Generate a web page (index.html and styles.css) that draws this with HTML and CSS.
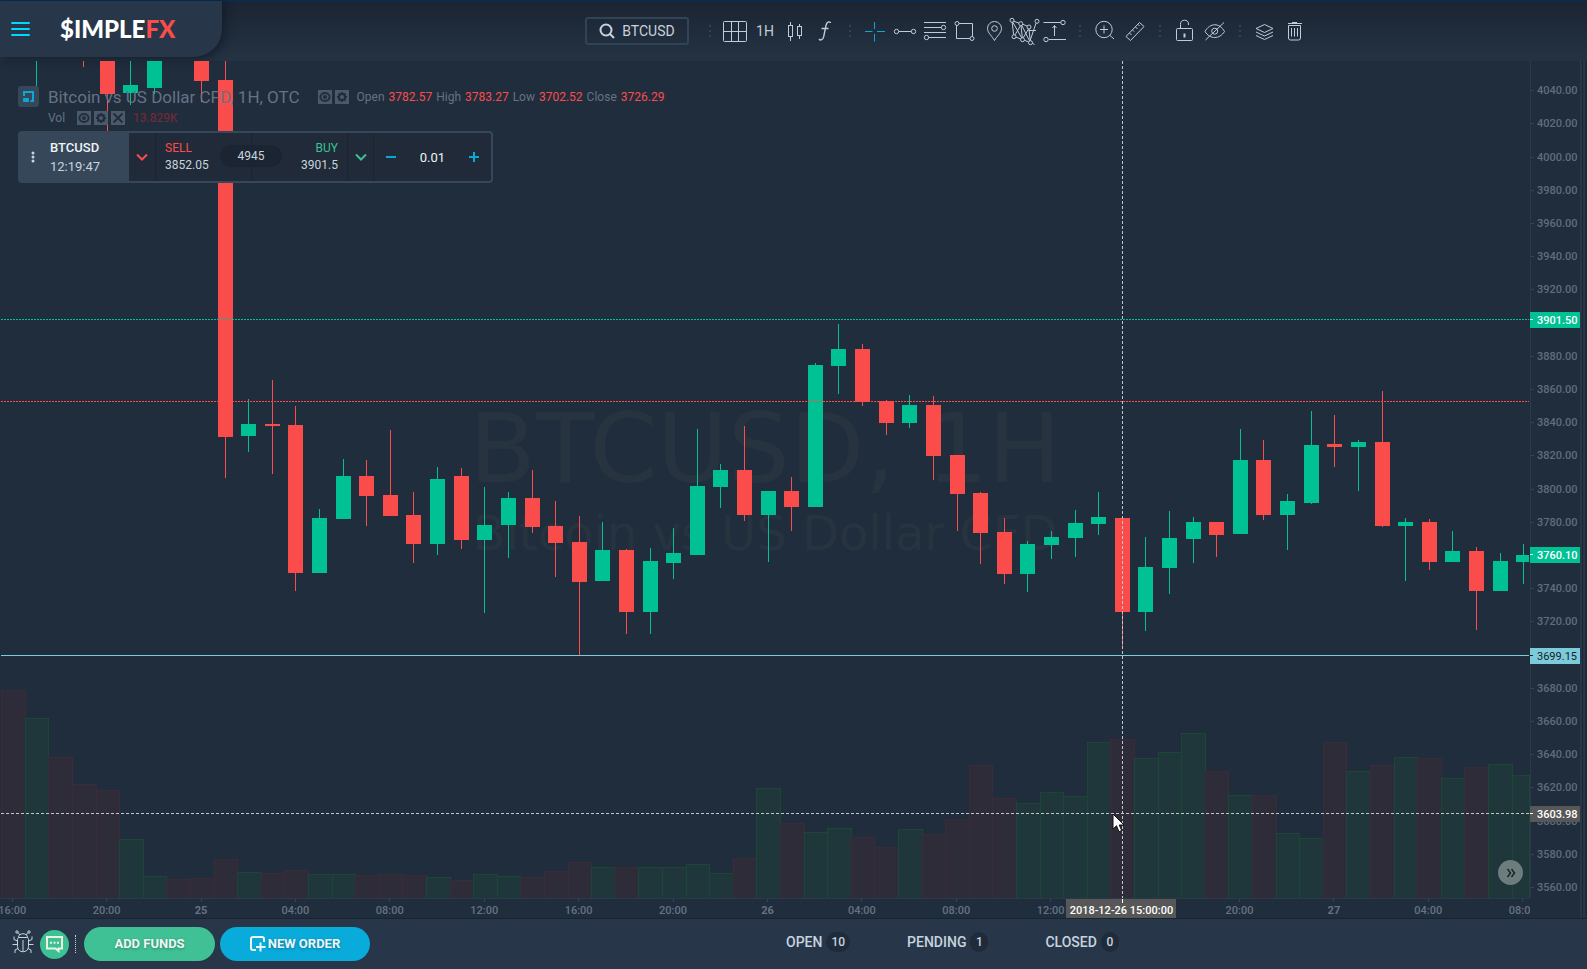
FILE: index.html
```html
<!DOCTYPE html>
<html lang="en">
<head>
<meta charset="utf-8">
<title>SimpleFX – BTCUSD</title>
<link rel="stylesheet" href="styles.css">
</head>
<body>
<header class="topbar">
  <div class="brand">
    <button class="burger" aria-label="Menu"><span></span><span></span><span></span></button>
    <a class="logo" href="#">$IMPLE<span class="logo-fx">FX</span></a>
  </div>
  <nav class="toolbar" aria-label="Chart tools">
    <button class="search"><svg width="16" height="16" viewBox="0 0 16 16"><circle cx="7" cy="7" r="5.5"/><path d="M11 11l4 4"/></svg>BTCUSD</button>
    <span class="sep"></span>
    <button class="tool" aria-label="Layout"><svg viewBox="0 0 30 30"><rect x="3.5" y="5.5" width="23" height="20" rx="1"/><path d="M11.5 5.5v20M18.5 5.5v20M3.5 15.5h23"/></svg></button>
    <button class="tool">1H</button>
    <button class="tool" aria-label="Chart type"><svg viewBox="0 0 30 30"><rect x="8.500" y="9.500" width="4" height="11"/><path d="M10.500 6v3.500M10.500 20.500V25M19.500 8v2.500M19.500 19.500V23"/><rect x="17.500" y="10.500" width="4" height="9"/></svg></button>
    <button class="tool" aria-label="Indicators"><svg viewBox="0 0 30 30"><path d="M20.500 7c-.3-1.700-3.600-2-4.500 2.500l-2.300 11.200c-.7 3.300-3.300 4-4.700 2.300M11.500 12.500h7" stroke-width="1.400"/></svg></button>
    <span class="sep"></span>
    <button class="tool tool-on" aria-label="Crosshair"><svg viewBox="0 0 30 30"><path d="M5 15.500h7.500M17 15.500h8M14.500 6v7M14.500 18v7.500"/></svg></button>
    <button class="tool" aria-label="Trend line"><svg viewBox="0 0 30 30"><circle cx="6.500" cy="15.500" r="2.200"/><circle cx="23.500" cy="15.500" r="2.200"/><path d="M8.700 15.500h12.600"/></svg></button>
    <button class="tool" aria-label="Fibonacci"><svg viewBox="0 0 30 30"><path d="M4 6.500h22M4 11.500h17.300M4 16.500h22M8.700 21.500H26"/><circle cx="23.500" cy="11.500" r="2.200"/><circle cx="6.500" cy="21.500" r="2.200"/></svg></button>
    <button class="tool" aria-label="Rectangle"><svg viewBox="0 0 30 30"><circle cx="7" cy="7.500" r="2"/><circle cx="22" cy="22.500" r="2"/><path d="M9 7.500h13.500v13M20 22.500H6.500v-13"/></svg></button>
    <button class="tool" aria-label="Marker"><svg viewBox="0 0 30 30"><path d="M14.500 24.500c-2-4-7-7.500-7-12a7 7 0 0 1 14 0c0 4.500-5 8-7 12z"/><circle cx="14.500" cy="12.500" r="2.800"/></svg></button>
    <button class="tool" aria-label="Pattern"><svg viewBox="0 0 30 30"><path d="M2.200 6.300l1.400 12.400M3.800 5.200l5.200 2M10.500 9.700l-5.500 9.200M11 9.700l1.300 12M2.800 6.200l8.800 15.500M12.800 8.300l4.400 1.800M18.500 13l-5.300 8.800M19 13l1.200 11.700M11.800 9.500l7.700 15.200M6 21.200l4.600 1.800M14.500 24.300l4 1.500M26 7.200l-6 17.600M18.500 14.500l7.500 0M22 27l2.500 1.500"/><circle cx="2" cy="4.300" r="2"/><circle cx="10.800" cy="7.700" r="2"/><circle cx="19" cy="11" r="2"/><circle cx="27" cy="5.300" r="2"/><circle cx="4" cy="20.700" r="2"/><circle cx="12.500" cy="23.700" r="2"/><circle cx="20.500" cy="26.700" r="2"/></svg></button>
    <button class="tool" aria-label="Range"><svg viewBox="0 0 30 30"><path d="M3.500 6.500h17.300M9 23.500h17M14.500 20V10M12.500 12l2-2.500 2 2.500"/><circle cx="23" cy="6.500" r="2.200"/><circle cx="6" cy="23.500" r="2.200"/></svg></button>
    <span class="sep"></span>
    <button class="tool" aria-label="Zoom in"><svg viewBox="0 0 30 30"><circle cx="14" cy="13.500" r="8.200"/><path d="M20 19.500l4 3.500M10 13.500h8M14 9.500v8"/></svg></button>
    <button class="tool" aria-label="Measure"><svg viewBox="0 0 30 30"><path d="M6 20.500L19.500 6.500l4.500 4L10.500 24.500zM9.500 17l2 2M12.500 14l1.500 1.500M15.500 11l2 2M18 8.500l1.500 1.500"/></svg></button>
    <span class="sep"></span>
    <button class="tool" aria-label="Lock"><svg viewBox="0 0 30 30"><rect x="6.500" y="12.500" width="16" height="12" rx="1"/><path d="M10.500 12.500V8.500a4 4 0 0 1 8-.5v1"/><path d="M14.500 17.500v4" stroke-width="2"/></svg></button>
    <button class="tool" aria-label="Hide drawings"><svg viewBox="0 0 30 30"><path d="M5 15.500c5-9 14.500-9 19.500 0-5 8-14.500 8-19.500 0zM5.500 24L24 6.500"/><circle cx="14.700" cy="15.200" r="3"/></svg></button>
    <span class="sep"></span>
    <button class="tool" aria-label="Layers"><svg viewBox="0 0 30 30"><path d="M14.500 8.500l8.500 4-8.500 4-8.500-4zM6 16l8.500 4 8.500-4M6 19.500l8.500 4 8.500-4"/></svg></button>
    <button class="tool" aria-label="Delete"><svg viewBox="0 0 30 30"><path d="M8 7.500h14M12 6.500h5M8.500 9.500h12v12.500a2 2 0 0 1-2 2h-8a2 2 0 0 1-2-2zM11.500 12v8.500M14.500 12v8.500M17.500 12v8.500"/></svg></button>
  </nav>
</header>

<main class="chart">
  <section class="plot">
    <div class="watermark"><span class="wm-symbol">BTCUSD, 1H</span><span class="wm-name">Bitcoin vs US Dollar CFD</span></div>
    <svg class="candles" id="candles" viewBox="0 0 1530 837" preserveAspectRatio="none"></svg>
    <div class="legend">
      <div class="legend-row">
        <button class="collapse" aria-label="Collapse"><svg width="13" height="13" viewBox="0 0 13 13"><path d="M2 6V2h9v9H8.500"/><rect class="solid" x="1" y="8" width="6" height="4" rx="1"/></svg></button>
        <h1 class="legend-title">Bitcoin vs US Dollar CFD, 1H, OTC</h1>
        <span class="minis"><button class="mini" aria-label="Show"><svg viewBox="0 0 14 14"><ellipse cx="7" cy="7" rx="4.600" ry="4"/><circle cx="7" cy="7" r="1"/></svg></button><button class="mini" aria-label="Settings"><svg viewBox="0 0 14 14"><circle cx="7" cy="7" r="3"/><path d="M7 2v2M7 10v2M2 7h2M10 7h2M3.500 3.500l1.400 1.400M9.100 9.100l1.400 1.400M10.500 3.500L9.100 4.900M4.900 9.100l-1.400 1.400"/></svg></button></span>
        <dl class="ohlc"><dt>Open</dt><dd>3782.57</dd><dt>High</dt><dd>3783.27</dd><dt>Low</dt><dd>3702.52</dd><dt>Close</dt><dd>3726.29</dd></dl>
      </div>
      <div class="vol-row">
        <span class="vol-name">Vol</span>
        <span class="minis"><button class="mini" aria-label="Show volume"><svg viewBox="0 0 14 14"><ellipse cx="7" cy="7" rx="4.600" ry="4"/><circle cx="7" cy="7" r="1"/></svg></button><button class="mini" aria-label="Volume settings"><svg viewBox="0 0 14 14"><circle cx="7" cy="7" r="3"/><path d="M7 2v2M7 10v2M2 7h2M10 7h2M3.500 3.500l1.400 1.400M9.100 9.100l1.400 1.400M10.500 3.500L9.100 4.900M4.900 9.100l-1.400 1.400"/></svg></button><button class="mini" aria-label="Remove volume"><svg viewBox="0 0 14 14"><path d="M2.500 2.500l9 9M11.500 2.500l-9 9"/></svg></button></span>
        <span class="vol-value">13.829K</span>
      </div>
      <div class="ticket">
        <div class="ticket-symbol">
          <svg width="4" height="12" viewBox="0 0 4 12"><circle cx="2" cy="2" r="1.500"/><circle cx="2" cy="6" r="1.500"/><circle cx="2" cy="10" r="1.500"/></svg>
          <div><strong>BTCUSD</strong><time>12:19:47</time></div>
        </div>
        <button class="chev chev-sell" aria-label="Sell options"><svg width="12" height="8" viewBox="0 0 12 8"><path d="M1 1.500l5 5 5-5"/></svg></button>
        <button class="side side-sell"><span>SELL</span>3852.05</button>
        <span class="spread">4945</span>
        <button class="side side-buy"><span>BUY</span>3901.5</button>
        <button class="chev chev-buy" aria-label="Buy options"><svg width="12" height="8" viewBox="0 0 12 8"><path d="M1 1.500l5 5 5-5"/></svg></button>
        <div class="stepper">
          <button aria-label="Decrease"><svg width="10" height="10" viewBox="0 0 10 10"><path d="M0 5h10"/></svg></button>
          <input aria-label="Volume" value="0.01">
          <button aria-label="Increase"><svg width="10" height="10" viewBox="0 0 10 10"><path d="M0 5h10M5 0v10"/></svg></button>
        </div>
      </div>
    </div>
    <button class="latest" aria-label="Scroll to latest"><svg width="10" height="10" viewBox="0 0 10 10"><path d="M1.500 1l3 4-3 4M5.500 1l3 4-3 4"/></svg></button>
    <svg class="cursor" width="14" height="20" viewBox="0 0 14 20"><path d="M1 1v15l3.500-3.300 2.500 6 2.700-1.200-2.500-5.500H12z"/></svg>
  </section>
  <aside class="prices">
    <ol class="price-list" id="prices"></ol>
    <span class="tag tag-buy">3901.50</span>
    <span class="tag tag-last">3760.10</span>
    <span class="tag tag-line">3699.15</span>
    <span class="tag tag-cross">3603.98</span>
  </aside>
  <div class="gutter"></div>
  <div class="times">
    <ol class="time-list"><li>16:00</li><li>20:00</li><li class="day">25</li><li>04:00</li><li>08:00</li><li>12:00</li><li>16:00</li><li>20:00</li><li class="day">26</li><li>04:00</li><li>08:00</li><li>12:00</li><li>16:00</li><li>20:00</li><li class="day">27</li><li>04:00</li><li>08:00</li></ol>
    <span class="time-tag">2018-12-26 15:00:00</span>
  </div>
</main>

<footer class="bottombar">
  <button class="bug" aria-label="Report a bug"><svg width="22" height="24" viewBox="0 0 22 24"><path d="M6.500 7.500c0-5 9-5 9 0zM5.500 9.500c0-1 .5-2 1.500-2h8c1 0 1.500 1 1.500 2v7c0 7-11 7-11 0zM11 10v11M8 5L6 2.500M14 5l2-2.500M5.500 11L2 9.500V6.500M16.500 11L20 9.500V6.500M5.500 14.500H.5M16.500 14.500h5M6 18.500l-3 1.500v3M16 18.500l3 1.500v3"/><circle cx="5" cy="2" r="1.200"/><circle cx="17" cy="2" r="1.200"/></svg></button>
  <button class="chat" aria-label="Chat"><svg width="17" height="17" viewBox="0 0 17 17"><path d="M1 1h15v11.500h-3.500V15l-3-2.500H1z"/><path d="M4 6.800h2M7.500 6.800h2M11 6.800h2"/></svg></button>
  <span class="foot-sep"></span>
  <button class="cta cta-funds">ADD FUNDS</button>
  <button class="cta cta-order"><svg width="16" height="16" viewBox="0 0 16 16"><path d="M6 14H3a2 2 0 0 1-2-2V3a2 2 0 0 1 2-2h9a2 2 0 0 1 2 2v3M10.500 6.500V15.500M6 11h9.500"/></svg>NEW ORDER</button>
  <nav class="orders">
    <a href="#">OPEN <span class="badge">10</span></a>
    <a href="#">PENDING <span class="badge">1</span></a>
    <a href="#">CLOSED <span class="badge">0</span></a>
  </nav>
</footer>
<script src="chart.js"></script>
</body>
</html>
```
FILE: styles.css
```css
* { box-sizing: border-box; }
body {
  margin: 0;
  height: 100vh;
  display: flex;
  flex-direction: column;
  overflow: hidden;
  background: #202d3d;
  color: #c7d3de;
  font-family: Roboto, "Liberation Sans", sans-serif;
  font-size: 12px;
}
button {
  padding: 0;
  border: 0;
  background: none;
  color: inherit;
  font: inherit;
  cursor: pointer;
}
svg { fill: none; stroke: currentColor; display: block; }
ol, dl, dd, h1 { margin: 0; padding: 0; list-style: none; }
a { color: inherit; text-decoration: none; }

/* Top bar */
.topbar {
  flex: none;
  height: 61px;
  display: flex;
  border-top: 1px solid #003058;
  background: linear-gradient(#1b2433, #243343);
}
.brand {
  flex: none;
  width: 222px;
  height: 56px;
  padding-left: 11px;
  display: flex;
  align-items: center;
  gap: 30px;
  border-bottom-right-radius: 28px;
  background: #273749;
  box-shadow: 2px 2px 10px rgba(10, 16, 26, .6);
}
.burger { display: grid; gap: 4px; width: 19px; }
.burger span { height: 2px; background: #00d9ff; border-radius: 1px; }
.logo { font: 900 24px/28px Lato, sans-serif; color: #fff; }
.logo-fx { color: #fb4c4c; }
.toolbar {
  display: flex;
  align-items: center;
  height: 60px;
  margin-left: 363px;
}
.search {
  display: flex;
  align-items: center;
  justify-content: center;
  gap: 7px;
  width: 104px;
  height: 28px;
  margin-right: 11px;
  border: 2px solid #314356;
  border-radius: 3px;
  font-size: 14px;
}
.search svg { stroke-width: 2; }
.sep {
  flex: none;
  width: 20px;
  height: 14px;
  background: radial-gradient(circle, #46566a 1px, transparent 1px) center / 20px 5px;
}
.tool { flex: none; width: 30px; height: 30px; font-size: 14px; color: #c0ccd8; }
.tool svg { width: 30px; height: 30px; overflow: visible; }
.tool-on { color: #0ba8d6; }

/* Chart */
.chart {
  flex: 1;
  min-height: 0;
  display: grid;
  grid-template: minmax(0, 1fr) 20px / minmax(0, 1fr) 50px 7px;
}
.plot { position: relative; overflow: hidden; }
.watermark {
  position: absolute;
  inset: 0;
  display: flex;
  flex-direction: column;
  align-items: center;
  justify-content: center;
  padding-top: 11px;
  font-family: "DejaVu Sans", sans-serif;
  color: #27333f;
  white-space: nowrap;
}
.wm-symbol { font-size: 97px; line-height: 96px; }
.wm-name { font-size: 48px; line-height: 72px; }
.candles {
  position: absolute;
  inset: 0;
  width: 100%;
  height: 100%;
  stroke: none;
  shape-rendering: crispEdges;
}
.up { fill: #00c194; }
.down { fill: #fb4c4c; }
.vol-up { fill: #1f373a; stroke: #1b4535; }
.vol-down { fill: #2f2c3a; stroke: #3b2a38; }
.line-buy { stroke: #00c194; stroke-dasharray: 2 1; }
.line-sell { stroke: #fb4c4c; stroke-dasharray: 2 1; }
.line-level { stroke: #7ccbdb; }
.line-cross { stroke: #c3c8cc; stroke-dasharray: 3 2; }

.legend { position: absolute; left: 18px; top: 25px; color: #647383; }
.legend-row { display: flex; align-items: center; height: 21px; }
.collapse {
  width: 21px;
  height: 21px;
  display: grid;
  place-items: center;
  border-radius: 3px;
  background: #36475a;
  color: #0ba8d6;
}
.collapse svg { stroke-width: 2; }
.collapse .solid { fill: currentColor; stroke: none; }
.legend-title { margin: 0 18px 0 9px; font-size: 17px; font-weight: 400; white-space: nowrap; }
.minis { display: flex; gap: 3px; }
.mini { width: 14px; height: 14px; background: #4b5a69; color: #212d3e; }
.mini svg { width: 14px; height: 14px; stroke-width: 2; }
.ohlc { display: flex; gap: 4px; margin-left: 8px; }
.ohlc dd { color: #fb4c4c; }
.vol-row { display: flex; align-items: center; height: 22px; padding-left: 30px; }
.vol-name { width: 29px; }
.vol-value { margin-left: 8px; color: #7a2a35; }

.ticket {
  display: flex;
  width: 475px;
  height: 52px;
  margin-top: 2px;
  border: 2px solid #36475a;
  border-radius: 4px;
  background: #212a38;
  color: #c7d3de;
  position: relative;
}
.ticket-symbol {
  display: flex;
  align-items: center;
  gap: 15px;
  width: 109px;
  padding-left: 11px;
  background: #36475a;
  font-size: 13px;
  line-height: 19px;
}
.ticket-symbol svg { fill: currentColor; stroke: none; }
.ticket-symbol strong { display: block; font-weight: 500; color: #eef3f7; }
.ticket-symbol time { display: block; }
.chev { width: 27px; display: grid; place-items: center; }
.chev svg { stroke-width: 2; }
.chev-sell { color: #fb4c4c; border-right: 1px solid #1b2431; }
.chev-buy { width: 26px; color: #3bc194; border-right: 1px solid #1b2431; }
.side { width: 96px; padding: 0 9px; line-height: 17px; text-align: left; }
.side span { display: block; }
.side-sell { border-right: 1px solid #1b2431; }
.side-sell span { color: #fb4c4c; }
.side-buy { border-right: 1px solid #1b2431; text-align: right; }
.side-buy span { color: #3bc194; }
.spread {
  position: absolute;
  left: 200px;
  top: 12px;
  width: 62px;
  height: 22px;
  border-radius: 11px;
  background: #1b2431;
  line-height: 22px;
  text-align: center;
}
.stepper { flex: 1; display: flex; align-items: center; justify-content: space-between; padding: 0 12px; }
.stepper button { color: #0ba8d6; }
.stepper svg { stroke-width: 2; }
.stepper input {
  width: 50px;
  border: 0;
  padding: 0;
  background: none;
  color: #eef3f7;
  font: 13px Roboto, sans-serif;
  text-align: center;
}
.latest {
  position: absolute;
  right: 7px;
  bottom: 13px;
  width: 25px;
  height: 25px;
  display: grid;
  place-items: center;
  border-radius: 50%;
  background: #6d7d7e;
  color: #1a2624;
}
.latest svg { stroke-width: 1.500; }
.cursor { position: absolute; left: 72.7%; top: 89.800%; fill: #fff; stroke: #10131a; }

/* Axes */
.prices {
  position: relative;
  border-left: 1px solid #2a394b;
  color: #5f6e7e;
  font-size: 11px;
  font-weight: 500;
}
.price-list { display: flex; flex-direction: column; height: calc(100% - 7px); margin-top: 13px; }
.price-list li { flex: 1; display: flex; align-items: center; gap: 3px; }
.price-list li::before { content: ""; width: 3px; height: 1px; background: #33445a; }
.tag {
  position: absolute;
  left: -1px;
  right: 0;
  height: 16px;
  padding-left: 7px;
  line-height: 17px;
  color: #fff;
}
.tag::before { content: ""; position: absolute; left: 0; top: 7px; width: 3px; height: 1px; background: currentColor; }
.tag-buy { top: 30%; background: #00c194; }
.tag-last { top: 58.100%; background: #00c194; }
.tag-line { top: 70.100%; background: #7ccbdb; color: #16202c; font-weight: 400; }
.tag-cross { top: 89%; background: #575757; }
.gutter {
  grid-row: 1 / 3;
  grid-column: 3;
  background: linear-gradient(90deg, #273749 2px, #1c2633 2px, #1c2633 3px, #273749 3px, #273749 5px, #1f2b3a 5px);
}
.times {
  grid-column: 1 / 3;
  grid-row: 2;
  position: relative;
  margin-right: 50px;
  overflow: hidden;
  border-top: 1px solid #2a394b;
  color: #647383;
  font-size: 11px;
  font-weight: 500;
}
.time-list { display: flex; width: 104.900%; margin-left: -35px; }
.time-list li { flex: 1; line-height: 18px; text-align: center; }
.time-list li::before { content: ""; display: block; width: 1px; height: 3px; margin: 0 auto; background: #33445a; }
.time-list .day { font-weight: 700; }
.time-tag {
  position: absolute;
  left: 69.700%;
  top: 0;
  width: 110px;
  height: 19px;
  background: #575757;
  color: #fff;
  line-height: 24px;
  text-align: center;
}
.time-tag::before { content: ""; position: absolute; left: 56px; top: 0; width: 1px; height: 4px; background: #fff; }

/* Bottom bar */
.bottombar {
  flex: none;
  height: 51px;
  display: flex;
  align-items: center;
  padding-left: 12px;
  border-top: 1px solid #1a2431;
  background: #273749;
}
.bug { margin-bottom: 4px; }
.chat {
  width: 29px;
  height: 29px;
  margin-left: 6px;
  display: grid;
  place-items: center;
  border-radius: 50%;
  background: #3bc194;
  color: #f1efe0;
}
.chat svg { stroke-width: 2; }
.foot-sep { height: 18px; margin: 0 8px 0 6px; border-left: 1px dotted #c7d3de; }
.cta {
  display: flex;
  align-items: center;
  justify-content: center;
  gap: 2px;
  width: 131px;
  height: 34px;
  padding-bottom: 1px;
  border-radius: 17px;
  background: #3fc195;
  color: #eef5f5;
  font-size: 13px;
  font-weight: 700;
  text-shadow: 0 1px 3px rgba(0, 0, 0, .3);
}
.cta svg { stroke-width: 2; }
.cta-order { width: 150px; margin-left: 5px; background: #09abdb; }
.orders { display: flex; gap: 57px; margin: 0 0 4px 416px; font-size: 14px; font-weight: 500; }
.orders a { display: flex; align-items: center; gap: 4px; height: 20px; }
.badge {
  min-width: 18px;
  height: 20px;
  padding: 0 5px;
  border-radius: 10px;
  background: #1f2b3a;
  font-size: 12px;
  line-height: 20px;
  text-align: center;
}
```
FILE: chart.js
```js
const NS = "http://www.w3.org/2000/svg";
const svg = document.getElementById("candles");
const TOP = 61, FLOOR = 837, RIGHT = 1529;
const centre = hour => Math.round(201 + 23.61 * hour);

function add(name, attrs) {
  const el = document.createElementNS(NS, name);
  for (const key in attrs) el.setAttribute(key, attrs[key]);
  svg.appendChild(el);
}

// Volume bars, one per hour from -8: direction and top edge
const volumes = "r690 g718 r757 r784 r790 g839 g876 r879 r878 r859 g872 r873 r870 g874 g874 r875 r874 r875 g877 r880 g874 g876 r877 r871 r862 g867 r867 g867 g867 g864 g873 r858 g788 r823 g832 g828 r837 r847 g829 r834 r819 r765 r798 g803 g792 g796 g742 r739 g758 g752 g733 r771 g795 r795 g833 g838 r742 g771 r765 g757 r758 g778 r767 g764 g775".split(" ");
volumes.forEach((v, i) => {
  const left = Math.round(201.8 + 23.6 * (i - 8) - 11.8);
  const right = Math.min(RIGHT, Math.round(201.8 + 23.6 * (i - 7) - 11.8));
  const y = Number(v.slice(1)) - TOP;
  add("rect", { class: v[0] === "g" ? "vol-up" : "vol-down", x: left + 0.5, y: y + 0.5, width: right - left, height: FLOOR - y });
});

// Hour, direction, body top, body bottom, wick top, wick bottom
const candles = [
  [-7,"g",61,61,61,87],[-5,"r",61,61,61,67],[-4,"r",61,94,61,150],[-3,"g",85,93,61,105],[-2,"g",61,88,61,94],
  [0,"r",61,81,61,102],[1,"r",80,437,61,478],[2,"g",424,436,399,452],[3,"r",424,426,380,474],[4,"r",425,573,406,591],
  [5,"g",518,573,509,573],[6,"g",476,519,459,519],[7,"r",476,496,460,526],[8,"r",495,516,430,516],[9,"r",515,544,492,563],
  [10,"g",479,544,467,555],[11,"r",476,540,468,549],[12,"g",525,540,487,613],[13,"g",498,525,492,558],[14,"r",498,527,470,533],
  [15,"r",526,543,501,577],[16,"r",542,582,516,655],[17,"g",550,581,522,581],[18,"r",550,612,549,634],[19,"g",561,612,548,634],
  [20,"g",553,563,528,579],[21,"g",486,555,429,555],[22,"g",470,487,464,508],[23,"r",470,515,426,521],[24,"g",491,515,491,562],
  [25,"r",491,507,477,531],[26,"g",365,507,363,507],[27,"g",349,366,324,394],[28,"r",349,402,344,406],[29,"r",401,423,400,435],
  [30,"g",405,423,395,428],[31,"r",405,456,396,480],[32,"r",455,494,455,531],[33,"r",493,533,492,564],[34,"r",532,574,518,584],
  [35,"g",544,574,541,592],[36,"g",537,545,531,559],[37,"g",523,538,510,557],[38,"g",517,524,492,535],[39,"r",518,612,518,648],
  [40,"g",567,612,537,631],[41,"g",538,568,511,594],[42,"g",522,539,517,563],[43,"r",522,535,522,557],[44,"g",460,534,429,534],
  [45,"r",460,515,440,520],[46,"g",501,515,494,550],[47,"g",445,503,411,504],[48,"r",444,447,415,467],[49,"g",442,447,440,491],
  [50,"r",442,526,391,527],[51,"g",522,526,518,581],[52,"r",522,562,519,570],[53,"g",551,562,531,562],[54,"r",551,591,547,630],
  [55,"g",561,591,553,591],[56,"g",555,562,544,584]
];
for (const [hour, dir, top, bottom, high, low] of candles) {
  const cls = dir === "g" ? "up" : "down";
  const x = centre(hour);
  add("rect", { class: cls, x, y: high - TOP, width: 1, height: low - high });
  if (bottom > top) add("rect", { class: cls, x: x - 7, y: top - TOP, width: Math.min(15, RIGHT - x + 7), height: bottom - top });
}

const level = (cls, y) => add("line", { class: cls, x1: 1, x2: RIGHT, y1: y - TOP + 0.5, y2: y - TOP + 0.5 });
level("line-buy", 319);
level("line-sell", 401);
level("line-level", 655);
level("line-cross", 813);
add("line", { class: "line-cross", x1: 1122.5, x2: 1122.5, y1: 0, y2: FLOOR });

const prices = document.getElementById("prices");
for (let p = 4040; p >= 3560; p -= 20) {
  const li = document.createElement("li");
  li.textContent = p.toFixed(2);
  prices.appendChild(li);
}
```
